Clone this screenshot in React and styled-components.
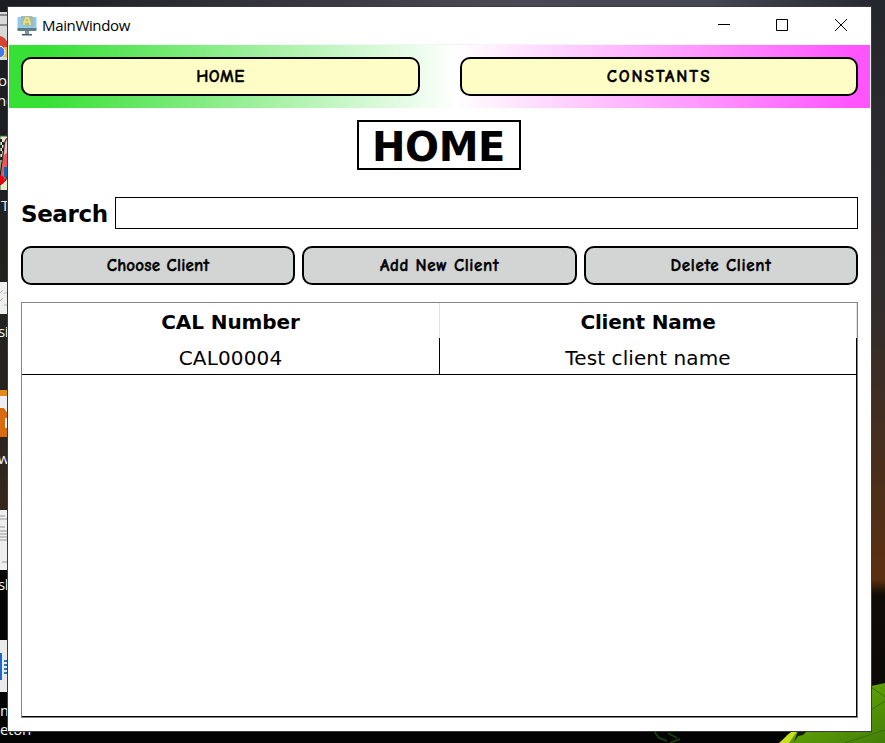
import React from "react";
import styled, { createGlobalStyle } from "styled-components";

const GlobalStyle = createGlobalStyle`
  *, *::before, *::after { box-sizing: border-box; }
  body { margin: 0; overflow: hidden; background: #1d1f24; }
`;

const Desktop = styled.main`
  position: relative;
  width: 885px;
  height: 743px;
  padding: 7px 14px 12px 8px;
  overflow: hidden;
`;

const Wallpaper = styled.svg`
  position: absolute;
  inset: 0;
  display: block;
`;

const ShortcutLabel = styled.span`
  position: absolute;
  left: ${(p) => p.$x}px;
  top: ${(p) => p.$y}px;
  font: 15px/20px "Open Sans", "Noto Sans", sans-serif;
  letter-spacing: -0.3px;
  color: #f4f4f4;
  white-space: nowrap;
`;

const Window = styled.section`
  position: relative;
  height: 724px;
  display: flex;
  flex-direction: column;
  background: #fff;
  box-shadow: 0 0 0 1px #3b3b3d;
`;

const TitleBar = styled.header`
  height: 38px;
  flex: none;
  display: flex;
  align-items: center;
  padding-left: 9px;
  border-bottom: 1px solid #f3f3fb;
`;

const WindowTitle = styled.span`
  flex: 1;
  margin-left: 5px;
  padding-bottom: 2px;
  font: 15px/20px "Open Sans", "Noto Sans", sans-serif;
  letter-spacing: ${(p) => p.$spacing}px;
  color: #000;
`;

const WindowControl = styled.button`
  width: 58px;
  height: 37px;
  display: grid;
  place-items: center;
  padding: 0 0 1px;
  border: 0;
  background: transparent;
`;

const Controls = styled.div`
  display: flex;
  margin-right: 1px;

  ${WindowControl}:not(:last-child) {
    padding-right: 2px;
  }
`;

const NavBar = styled.nav`
  height: 63px;
  flex: none;
  margin: 0 1px;
  padding: 12px;
  display: grid;
  grid-template-columns: 399px 398px;
  justify-content: space-between;
  background: linear-gradient(90deg, #37e035 4%, #ffffff 52%, #ff55ff 98%);
`;

const PillButton = styled.button`
  height: 39px;
  padding: 1px 0 0;
  border: 2px solid #000;
  border-radius: 10px;
  background: ${(p) => (p.$nav ? "#fffdc6" : "#d3d5d4")};
  color: #000;
  font: 700 17px/20px "Comic Sans MS", "Comic Neue", "Lato", sans-serif;
  letter-spacing: ${(p) => p.$spacing}px;
  -webkit-text-stroke: 0.4px #000;
`;

const Page = styled.div`
  flex: 1;
  display: flex;
  flex-direction: column;
  padding: 12px 13px 13px;
  font-family: "Verdana", "DejaVu Sans", sans-serif;
  color: #000;
`;

const PageTitle = styled.h1`
  align-self: center;
  width: 164px;
  height: 50px;
  margin: 0 2px 0 0;
  border: 2px solid #000;
  font-size: 40px;
  line-height: 51px;
  letter-spacing: -0.4px;
  text-align: center;
`;

const SearchRow = styled.label`
  display: flex;
  align-items: center;
  height: 32px;
  margin-top: 27px;
`;

const SearchLabel = styled.span`
  width: 94px;
  font-size: 23px;
  font-weight: 700;
  line-height: 32px;
  padding-top: 2px;
  letter-spacing: -0.4px;
`;

const SearchInput = styled.input`
  flex: 1;
  height: 32px;
  border: 1px solid #000;
  border-radius: 0;
  background: #fff;
  outline: none;
`;

const Actions = styled.div`
  display: grid;
  grid-template-columns: 274px 275px 274px;
  gap: 7px;
  margin-top: 17px;
`;

const TableFrame = styled.div`
  height: 416px;
  margin-top: 17px;
  border: 1px solid #82838b;
  display: flex;
  flex-direction: column;
`;

const Row = styled.div`
  display: grid;
  grid-template-columns: 418px 1fr;
`;

const HeadCell = styled.div`
  height: 35px;
  border-right: 1px solid #e2e2e2;
  font-size: 20px;
  font-weight: 700;
  line-height: 39px;
  letter-spacing: ${(p) => p.$spacing}px;
  text-align: center;
`;

const TableBody = styled.div`
  flex: 1;
  border-right: 1px solid #000;
  border-bottom: 1px solid #000;
`;

const Cell = styled.div`
  height: 37px;
  border-right: ${(p) => (p.$last ? 0 : 1)}px solid #000;
  border-bottom: 1px solid #000;
  font-size: 20px;
  line-height: 41px;
  letter-spacing: ${(p) => p.$spacing}px;
  text-align: center;
`;

const shortcuts = [
  ["or", -2, 70], ["nc", -3, 90], ["T", 1, 195], ["si", -2, 321],
  ["w", -2, 448], ["sk", -2, 574], ["m", 0, 700], ["eton", 0, 719],
];

const actions = [["Choose Client", 0.2], ["Add New Client", 0.6], ["Delete Client", 0.65]];

function DesktopArt() {
  return (
    <Wallpaper width="885" height="743" aria-hidden="true">
      <defs>
        <linearGradient id="top"><stop offset="0" stopColor="#1a1b20" /><stop offset=".55" stopColor="#4a4853" /><stop offset=".8" stopColor="#454753" /><stop offset="1" stopColor="#25262d" /></linearGradient>
        <linearGradient id="left" x2="0" y2="1"><stop offset="0" stopColor="#1b1d22" /><stop offset=".5" stopColor="#24231f" /><stop offset=".7" stopColor="#37271c" /><stop offset=".78" stopColor="#050505" /></linearGradient>
        <linearGradient id="right" x2="0" y2="1"><stop offset="0" stopColor="#25272e" /><stop offset=".4" stopColor="#302d2d" /><stop offset=".57" stopColor="#432e20" /><stop offset=".78" stopColor="#5b3010" /><stop offset=".8" stopColor="#100b06" /><stop offset="1" stopColor="#080905" /></linearGradient>
        <linearGradient id="leaf" x2="1" y2="1"><stop stopColor="#a3cc10" /><stop offset=".35" stopColor="#64a506" /><stop offset="1" stopColor="#437e08" /></linearGradient>
      </defs>
      <rect width="885" height="8" fill="url(#top)" />
      <rect x="67" y="6" width="60" height="1" fill="#756b53" />
      <rect x="187" y="6" width="14" height="1" fill="#6f6f72" />
      <rect x="258" y="6" width="56" height="1" fill="#1d66a0" />
      <rect width="9" height="743" fill="url(#left)" />
      <rect x="870" width="15" height="743" fill="url(#right)" />
      <rect y="731" width="885" height="12" fill="#030304" />
      <path d="M654 731L659 738L667 741M668 733L677 738M670 743L680 739" stroke="#183c0c" strokeWidth="2" fill="none" />
      <path d="M780 743L788 734L800 730L871 730V686L885 683V743Z" fill="url(#leaf)" />
      <path d="M779 743L791 732L798 730L789 743Z" fill="#c7df20" />
      <path d="M798 731H807L803 735L798 736L794 742Z" fill="#101a03" />
      <path d="M871 710L885 701M844 743L885 730M871 687L885 697" stroke="#357008" fill="none" />
      <rect y="12" width="8" height="48" fill="#d9d9d9" />
      <path d="M0 15H8M0 25H8" stroke="#888" strokeWidth="2" />
      <path d="M0 36Q5 37 8 43V50H0Z" fill="#d34537" />
      <path d="M4 47H8V57H2Z" fill="#edba24" />
      <circle cx="-1" cy="52" r="6" fill="#4579e8" stroke="#fff" />
      <path d="M0 136H8V198H0Z" fill="#e7e7ca" stroke="#28643a" />
      <path d="M0 190H9V200H0Z" fill="#1d2023" />
      <path d="M1 139V160M3 142V154" stroke="#222" strokeWidth="2" strokeDasharray="3 3" />
      <path d="M8 138Q5 138 4 146L0 177V185L6 180L8 165Z" fill="#e8555b" stroke="#161616" />
      <path d="M8 140Q5 140 5 147L4 155L8 152Z" fill="#d5c4ca" />
      <circle cx="0" cy="180" r="4.5" fill="#e5000b" />
      <rect x="4" y="167" width="4" height="10" fill="#1765ac" />
      <rect y="282" width="8" height="32" fill="#eee" />
      <path d="M0 293L3 290M4 293H8M0 301L3 298M4 305H8" stroke="#a3c4a3" />
      <rect y="390" width="8" height="47" fill="#efefef" />
      <rect y="390" width="8" height="6" fill="#e38b1b" />
      <path d="M0 408H4L8 414V437H0Z" fill="#d96b10" />
      <rect x="5" y="418" width="3" height="10" fill="#eee" />
      <rect y="510" width="8" height="60" fill="#eee" />
      <path d="M0 516H5M0 519H8M0 527H5M0 531H8M0 534H8M0 537H7M0 540H8M2 562H8" stroke="#999" />
      <rect y="640" width="8" height="52" fill="#eaeaea" />
      <rect y="653" width="2" height="27" fill="#2265c4" />
      <path d="M4 661H8M4 665H8M4 669H8M4 673H8" stroke="#2477bc" strokeWidth="2" />
    </Wallpaper>
  );
}

function AppIcon() {
  return (
    <svg width="20" height="20" viewBox="0 0 20 20" aria-hidden="true">
      <rect x="0.5" y="1" width="19" height="14" rx="1" fill="#91cce6" />
      <path d="M0.5 12H19.5V14Q19.5 15 18 15H2Q0.5 15 0.5 14Z" fill="#5d7c87" />
      <path d="M4 0H15L17 2V10H6L4 8Z" fill="#a9b9b7" />
      <path d="M7 9V7L9 2H11L13 7V9M8 6H12" fill="none" stroke="#f4e75c" strokeWidth="1.7" />
      <path d="M8 15H12V18H8Z" fill="#7c969f" />
      <path d="M5 18H15V19.5H5Z" fill="#455c66" />
    </svg>
  );
}

export default function App() {
  return (
    <Desktop>
      <GlobalStyle />
      <DesktopArt />
      {shortcuts.map(([text, x, y]) => <ShortcutLabel key={text} $x={x} $y={y}>{text}</ShortcutLabel>)}
      <Window>
        <TitleBar>
          <AppIcon />
          <WindowTitle $spacing={-0.35}>MainWindow</WindowTitle>
          <Controls>
            <WindowControl aria-label="Minimize"><svg width="12" height="12"><path d="M0 5.5H12" stroke="#000" /></svg></WindowControl>
            <WindowControl aria-label="Maximize"><svg width="12" height="12"><path d="M.5 .5H11.5V11.5H.5Z" fill="none" stroke="#000" /></svg></WindowControl>
            <WindowControl aria-label="Close"><svg width="12" height="12"><path d="M0 0L12 12M12 0L0 12" stroke="#000" /></svg></WindowControl>
          </Controls>
        </TitleBar>
        <NavBar>
          <PillButton $nav $spacing={0.6}>HOME</PillButton>
          <PillButton $nav $spacing={1.9}>CONSTANTS</PillButton>
        </NavBar>
        <Page>
          <PageTitle>HOME</PageTitle>
          <SearchRow><SearchLabel>Search</SearchLabel><SearchInput aria-label="Search" /></SearchRow>
          <Actions>
            {actions.map(([label, spacing]) => <PillButton key={label} $spacing={spacing}>{label}</PillButton>)}
          </Actions>
          <TableFrame>
            <Row><HeadCell $spacing={-0.1}>CAL Number</HeadCell><HeadCell $spacing={-0.2}>Client Name</HeadCell></Row>
            <TableBody>
              <Row><Cell $spacing={0.15}>CAL00004</Cell><Cell $last $spacing={0.1}>Test client name</Cell></Row>
            </TableBody>
          </TableFrame>
        </Page>
      </Window>
    </Desktop>
  );
}
